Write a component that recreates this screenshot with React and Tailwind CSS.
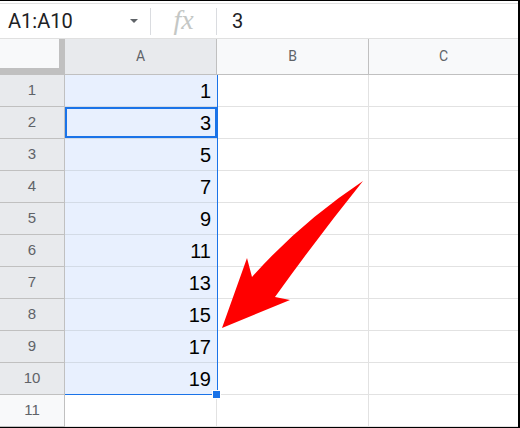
import React from 'react';

const values = [1, 3, 5, 7, 9, 11, 13, 15, 17, 19];

const Arrow = () => (
  <svg className="absolute left-0 top-0 pointer-events-none" width="520" height="428" viewBox="0 0 520 428">
    <path
      d="M363 180 Q300 222 252 276 L247 257 L222 327 L290 299 L275 296 Q318 236 363 180 Z"
      fill="#ff0000"
    />
  </svg>
);

const FormulaBar = () => (
  <div className="mt-[2px] h-[36px] flex items-center border-t border-b border-[#e0e0e0] bg-white font-['Roboto',sans-serif]">
    <div className="w-[150px] flex items-center justify-between pl-[8px] pr-[12px]">
      <span className="text-[20px] text-[#202124] leading-none">A1:A10</span>
      <svg width="8" height="4" viewBox="0 0 8 4">
        <path d="M0 0 L8 0 L4 4 Z" fill="#5f6368" />
      </svg>
    </div>
    <div className="w-px h-[27px] bg-[#dadce0]" />
    <div className="w-[65px] flex items-center justify-center">
      <span className="font-['Liberation_Serif',serif] italic text-[28px] text-[#c4c7c5] leading-none -mt-[2px]">fx</span>
    </div>
    <div className="w-px h-[27px] bg-[#dadce0]" />
    <span className="ml-[15px] text-[20px] text-[#202124] leading-none">3</span>
  </div>
);

const Header = () => (
  <div className="flex h-[36px] border-b border-[#c0c0c0] font-['Roboto',sans-serif] text-[14px] text-[#5f6368]">
    <div className="w-[65px] shrink-0 bg-[#c0c0c0]">
      <div className="w-[59px] h-[29px] bg-[#f8f9fa]" />
    </div>
    <div className="w-[152px] shrink-0 flex items-center justify-center bg-[#e8eaed] border-r border-[#c0c0c0]">A</div>
    <div className="w-[152px] shrink-0 flex items-center justify-center bg-[#f8f9fa] border-r border-[#c0c0c0]">B</div>
    <div className="flex-1 flex items-center justify-center bg-[#f8f9fa]">C</div>
  </div>
);

const Row = ({ n, value }) => {
  const selected = value !== undefined;
  return (
    <div className="flex h-[32px]">
      <div
        className={`w-[65px] shrink-0 flex items-center justify-center border-r border-b border-[#c0c0c0] text-[15px] text-[#5f6368] ${
          selected ? 'bg-[#e8eaed]' : 'bg-[#f8f9fa]'
        }`}
      >
        {n}
      </div>
      <div
        className={`w-[152px] shrink-0 flex items-center justify-end pr-[6px] text-[20px] text-black border-b ${
          selected ? 'bg-[#e8f0fe] border-[#d3dbe6]' : 'bg-white border-[#e2e2e2] border-r'
        } ${n === 2 ? 'ring-2 ring-inset ring-[#1a73e8]' : ''}`}
      >
        {value}
      </div>
      <div className="w-[152px] shrink-0 border-r border-b border-[#e2e2e2]" />
      <div className="flex-1 border-b border-[#e2e2e2]" />
    </div>
  );
};

export default function App() {
  return (
    <div className="relative w-[520px] h-[428px] overflow-hidden bg-white border-t border-b border-r-2 border-black font-['Liberation_Sans',Arial,sans-serif]">
      <FormulaBar />
      <Header />
      <div className="relative">
        {values.map((v, i) => (
          <Row key={i} n={i + 1} value={v} />
        ))}
        <Row n={11} />
        {/* range outline */}
        <div className="absolute left-[65px] top-0 w-[153px] h-[320px] border-r border-b border-[#1a73e8] pointer-events-none" />
        <div className="absolute left-[212px] top-[315px] w-[9px] h-[9px] bg-[#1a73e8] border border-white pointer-events-none" />
      </div>
      <Arrow />
    </div>
  );
}
